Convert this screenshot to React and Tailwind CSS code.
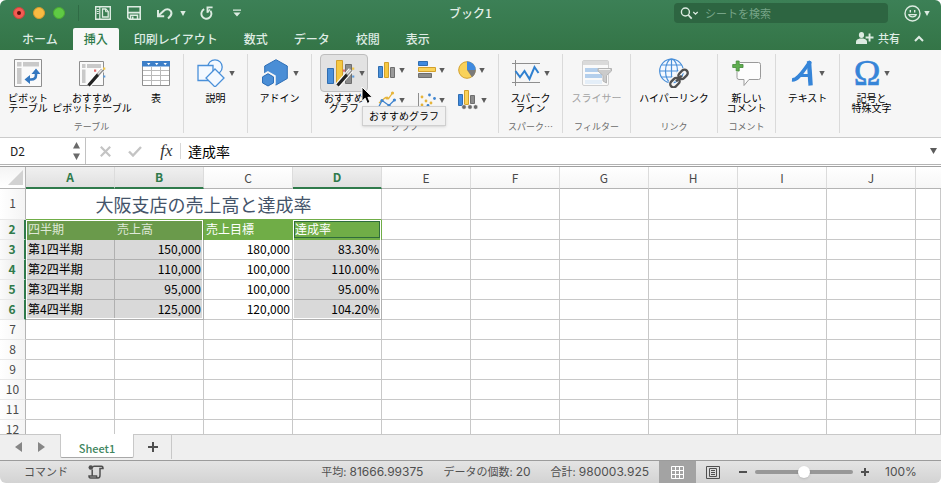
import { useState } from 'react';

const tabs = ['ホーム', '挿入', '印刷レイアウト', '数式', 'データ', '校閲', '表示'];
const columns = ['A', 'B', 'C', 'D', 'E', 'F', 'G', 'H', 'I', 'J'];
const selectedColumns = ['A', 'B', 'D'];

const records = [
  ['四半期', '売上高', '売上目標', '達成率'],
  ['第1四半期', '150,000', '180,000', '83.30%'],
  ['第2四半期', '110,000', '100,000', '110.00%'],
  ['第3四半期', '95,000', '100,000', '95.00%'],
  ['第4四半期', '125,000', '120,000', '104.20%'],
];

const stats = [
  { label: '平均', value: '81666.99375' },
  { label: 'データの個数', value: '20' },
  { label: '合計', value: '980003.925' },
];

const Caret = ({ className = 'text-[#5c5c5c]' }) => (
  <svg className={`shrink-0 ${className}`} width="6" height="5" viewBox="0 0 6 5" fill="currentColor">
    <path d="M.3 0h5.400L3 5z" />
  </svg>
);

/* Title bar icons */

const SidebarIcon = () => (
  <svg width="16" height="14" viewBox="0 0 16 14" fill="none" stroke="#dcebe1">
    <path d="M.7.7h14.6v12.6H.7z" strokeWidth="1.4" />
    <path d="M4.8 1v12" strokeWidth="1.2" />
    <path d="M1.8 3.5h2M1.8 5.5h2M1.8 7.5h2" strokeWidth="1" />
    <path d="M7.5 3h3.3l2.4 2.4V11H7.5z" strokeWidth="1.3" />
    <path d="M10.5 3v2.7h2.7" strokeWidth="1" />
  </svg>
);

const SaveIcon = () => (
  <svg width="14" height="14" viewBox="0 0 14 14" fill="none" stroke="#dcebe1">
    <path d="M.8.8h12.4v12.4H2.6L.8 11.6z" strokeWidth="1.6" />
    <path d="M1 6.6h12" strokeWidth="1.6" />
    <path d="M3.5 13V9.3h7V13" strokeWidth="1.5" />
    <path d="M5.7 10.5V13" strokeWidth="1.6" />
  </svg>
);

const UndoIcon = () => (
  <svg width="16" height="13" viewBox="0 0 16 13" fill="none" stroke="#dcebe1" strokeWidth="2">
    <path d="M1 3v6.200h6.200" />
    <path d="M1.400 8.800L6.500 4C9 1.600 12 1.800 13.600 3.800c1.600 2.200 1.200 4.600-2.600 7.700" />
  </svg>
);

const RedoIcon = () => (
  <svg width="13" height="14" viewBox="0 0 13 14" fill="none" stroke="#dcebe1" strokeWidth="1.900">
    <path d="M4.200 3.200A5 5 0 1 0 10.400 4.700" />
    <path d="M12.600 1.400H7.500v5.400" />
    <path d="M7.500 6.200L10 3.500" strokeWidth="1.300" />
  </svg>
);

const CustomizeIcon = () => (
  <svg width="8" height="8" viewBox="0 0 8 8" fill="#dcebe1">
    <path d="M0 .4h8v1.3H0zM.4 3.4h7.2L4 7.4z" />
  </svg>
);

const SearchIcon = () => (
  <svg className="shrink-0" width="19" height="13" viewBox="0 0 19 13" fill="none" stroke="#dcebe1" strokeWidth="1.4">
    <circle cx="5.4" cy="5" r="4" />
    <path d="M8.3 8l3.4 3.6" strokeWidth="1.8" />
    <path d="M13.3 5l2.2 2.1L17.7 5" strokeWidth="1.3" />
  </svg>
);

const SmileIcon = () => (
  <svg width="17" height="17" viewBox="0 0 17 17" fill="none" stroke="#dcebe1" strokeWidth="1.4">
    <circle cx="8.5" cy="8.5" r="7.5" />
    <path d="M6.3 5v2.400M10.700 5v2.400" />
    <path d="M4.800 9.600c.8 3 6.600 3 7.400 0z" strokeWidth="1.2" />
  </svg>
);

const ShareIcon = () => (
  <svg width="18" height="12" viewBox="0 0 18 12" fill="#dcebe1">
    <ellipse cx="5.5" cy="3" rx="2.6" ry="3" />
    <path d="M0 12V9.5C0 7.800 2 7 3.800 6.500h3.400C9 7 11 7.800 11 9.500V12z" />
    <path d="M12.600 1.500h1.900v3H17.500v1.900h-3v3h-1.900v-3h-3V4.500h3z" />
  </svg>
);

/* Ribbon icons */

const Wand = () => (
  <g>
    <path d="M10.500 26.500L24 11" stroke="#fff" strokeWidth="5.500" />
    <path d="M10.500 26.500L20 15.600" stroke="#222" strokeWidth="3.200" />
    <path d="M20 15.600L24.300 10.700" stroke="#8c8c8c" strokeWidth="3.200" />
    <path d="M20.200 14.800L23.700 10.800" stroke="#e8e8e8" strokeWidth="1.300" />
    <path d="M16 10.500h2.200v2.200H16z" fill="#e26b6b" />
    <path d="M25 8.500h2.300v2.300H25z" fill="#f2c84b" />
    <path d="M25.200 16.500h2.100v2.100h-2.100z" fill="#5a9bdc" />
  </g>
);

const PivotIcon = () => (
  <svg width="28" height="28" viewBox="0 0 28 28" fill="none">
    <path d="M.5.5h27v27H.5z" fill="#fafafa" stroke="#8e8e8e" />
    <path d="M3 3h4.500v4.500H3zM9 3h16v4.500H9zM3 9h4.500v16H3z" fill="#c9c9c9" />
    <path d="M15 20.500h2c3.500 0 5-1.700 5-4.500v-1.500" stroke="#3578c0" strokeWidth="2.600" />
    <path d="M10.500 20.500l5.500-4.500v9zM22 9.500l4.500 5.500h-9z" fill="#3578c0" />
  </svg>
);

const RecommendedPivotIcon = () => (
  <svg width="28" height="28" viewBox="0 0 28 28" fill="none">
    <path d="M1.500 2.500h24v24h-24z" fill="#fafafa" stroke="#8e8e8e" />
    <path d="M4 5h3.500v4H4zM9 5h14v4H9zM4 10.500h3.500V24H4z" fill="#c9c9c9" />
    <Wand />
  </svg>
);

const TableIcon = () => (
  <svg width="28" height="28" viewBox="0 0 28 28" fill="none">
    <path d="M.5 2.500h27v24H.5z" fill="#fff" stroke="#8e8e8e" />
    <path d="M0 2h28v5.500H0z" fill="#3d7fc8" />
    <path d="M5 4h3.400L6.700 6.200zM13 4h3.400l-1.700 2.200zM21.500 4h3.400l-1.700 2.200z" fill="#fff" />
    <path d="M1 11.500h26M1 16.500h26M1 21.500h26M9.500 8v18M18.500 8v18" stroke="#b9b9b9" />
  </svg>
);

const ShapesIcon = () => (
  <svg width="28" height="28" viewBox="0 0 28 28" fill="#f4f9ff" stroke="#4a90d9" strokeWidth="1.3">
    <circle cx="18" cy="8" r="7.2" />
    <path d="M1 6.500h15v15H1z" />
    <path d="M18 10l9 9-9 9-9-9z" />
  </svg>
);

const AddInIcon = () => (
  <svg width="28" height="28" viewBox="0 0 28 28" fill="#4a8ed6" stroke="#2f6fb6">
    <path d="M15 .7L26.300 7v12.500L15 26 3.700 19.500V7z" />
    <path d="M7 13.500l6.500 3.700v7.500L7 28.300.5 24.600v-7.400z" stroke="#f6f6f6" strokeWidth="2.500" />
    <path d="M7 14.700l5.500 3.200v6L7 27l-5.500-3.100v-6z" />
  </svg>
);

const RecommendedChartIcon = () => (
  <svg width="28" height="28" viewBox="0 0 28 28">
    <path d="M.5 9.500h6v15h-6z" fill="#4a90d9" stroke="#2f6db0" />
    <path d="M9.500 1.500h6v23h-6z" fill="#f5c842" stroke="#d3a02a" />
    <path d="M18.500 5.500h6v19h-6z" fill="#8c8c8c" stroke="#6e6e6e" />
    <Wand />
  </svg>
);

const ColumnChartIcon = () => (
  <svg width="18" height="18" viewBox="0 0 18 18">
    <path d="M.5 5.500h4v11h-4z" fill="#4a90d9" stroke="#2f6db0" />
    <path d="M6.500 1.500h4v15h-4z" fill="#f5c842" stroke="#d3a02a" />
    <path d="M12.500 6.500h4v10h-4z" fill="#9a9a9a" stroke="#6e6e6e" />
  </svg>
);

const BarChartIcon = () => (
  <svg width="18" height="18" viewBox="0 0 18 18">
    <path d="M.5.5h9v4h-9z" fill="#3f8ae0" stroke="#2f6db0" />
    <path d="M.5 6.500h17v4H.5z" fill="#f9d25a" stroke="#d3a02a" />
    <path d="M.5 12.500h13v4h-13z" fill="#8c8c8c" stroke="#6e6e6e" />
  </svg>
);

const PieChartIcon = () => (
  <svg width="18" height="18" viewBox="0 0 18 18">
    <circle cx="9" cy="9" r="8.3" fill="#f9d25a" stroke="#d3a02a" />
    <path d="M9 9V.3A8.700 8.700 0 0 1 17.700 9z" fill="#3f8ae0" />
    <path d="M9 9h8.700a8.700 8.700 0 0 1-3.700 7.200z" fill="#7a7a7a" />
  </svg>
);

const LineChartIcon = () => (
  <svg width="18" height="18" viewBox="0 0 18 18" fill="none" strokeWidth="1.3">
    <path d="M1 12l6.500-5.500 3 1.200L14.500 2" stroke="#e6b43a" />
    <path d="M0 17.500L4 9.500l7 5 5.500-5.500" stroke="#3f84cf" />
    <g fill="#e6b43a">
      <circle cx="9" cy="7" r="1.600" />
      <circle cx="14.500" cy="2" r="1.600" />
    </g>
    <g fill="#3f84cf">
      <circle cx="4" cy="9.500" r="1.600" />
      <circle cx="11" cy="14.500" r="1.600" />
      <circle cx="16.400" cy="9" r="1.600" />
    </g>
  </svg>
);

const ScatterChartIcon = () => (
  <svg width="18" height="18" viewBox="0 0 18 18">
    <path d="M.5 2v15.500H18" fill="none" stroke="#8e8e8e" />
    <g fill="#e6b43a">
      <circle cx="4" cy="6" r="1.400" />
      <circle cx="8" cy="10" r="1.400" />
      <circle cx="13" cy="12" r="1.400" />
      <circle cx="4" cy="14" r="1.400" />
    </g>
    <g fill="#3f84cf">
      <circle cx="11.500" cy="4" r="1.400" />
      <circle cx="16.500" cy="7.500" r="1.400" />
      <circle cx="10" cy="14.500" r="1.400" />
    </g>
  </svg>
);

const ComboChartIcon = () => (
  <svg width="20" height="20" viewBox="0 0 20 20">
    <path d="M.5 4.500h4v11h-4z" fill="#3f8ae0" stroke="#2f6db0" />
    <path d="M6.500.5h4v14h-4z" fill="#f9d25a" stroke="#d3a02a" />
    <path d="M12.500 5.500h4v8h-4z" fill="#8c8c8c" stroke="#6e6e6e" />
    <g fill="#6a6a6a" stroke="#f6f6f6" strokeWidth=".6">
      <circle cx="6" cy="17" r="2.300" />
      <circle cx="12" cy="17" r="2.300" />
      <circle cx="17.600" cy="17" r="2.300" />
    </g>
  </svg>
);

const SparklineIcon = () => (
  <svg width="28" height="28" viewBox="0 0 28 28" fill="none">
    <path d="M0 4.500h28M0 23.500h28M3.500 1v26" stroke="#8e8e8e" />
    <path d="M3.500 12l4.500 6 4.500-6 5 8 5-12 4 6" stroke="#2f80d0" strokeWidth="2" />
  </svg>
);

const SlicerIcon = () => (
  <svg width="30" height="28" viewBox="0 0 30 28" fill="none">
    <rect x=".5" y="1.500" width="26" height="25" rx="1.500" fill="#fafafa" stroke="#d0d0d0" />
    <path d="M1 2h25v4H1z" fill="#dadada" />
    <path d="M3 9h17v4H3zM3 15h17v4H3z" fill="#b4cfec" />
    <path d="M3 21h17v4H3z" fill="#e4eef8" />
    <path d="M16 9.500h13.500v2.500l-5 4.500V24l-3.500-2v-5.500L16 12z" fill="#cbcbcb" stroke="#b4b4b4" />
    <path d="M17 10.500h11" stroke="#f2f2f2" />
  </svg>
);

const HyperlinkIcon = () => (
  <svg width="30" height="30" viewBox="0 0 30 30" fill="none">
    <g stroke="#4a90d9" strokeWidth="1.200">
      <circle cx="12.500" cy="13" r="11.800" fill="#f4f9ff" />
      <ellipse cx="12.500" cy="13" rx="6" ry="11.800" />
      <path d="M12.500 1v24M.7 13h23.600M2.500 7h20M2.500 19h20" />
    </g>
    <g transform="rotate(-45 20 20.500)">
      <g stroke="#f6f6f6" strokeWidth="5">
        <rect x="10" y="17" width="10" height="7" rx="3.500" />
        <rect x="20" y="17" width="10" height="7" rx="3.500" />
      </g>
      <g stroke="#505050" strokeWidth="2.400">
        <rect x="9" y="17.200" width="10.500" height="6.600" rx="3.300" />
        <rect x="20.500" y="17.200" width="10.500" height="6.600" rx="3.300" />
        <path d="M16 20.500h8" />
      </g>
    </g>
  </svg>
);

const CommentIcon = () => (
  <svg width="30" height="28" viewBox="0 0 30 28" fill="none">
    <path d="M6 3.500h20.500q2 0 2 2v13q0 2-2 2H17l-5 6v-6H7q-2 0-2-2v-13z" fill="#fdfdfd" stroke="#9a9a9a" />
    <path d="M4 1h4v4h4v4H8v4H4V9H0V5h4z" fill="#f6f6f6" />
    <path d="M4.200 2h3v3.500H11v3H7.200V12h-3V8.500H.7v-3h3.500z" fill="#5fae4f" stroke="#44893a" strokeWidth=".8" />
  </svg>
);

const TextIcon = () => (
  <svg width="24" height="28" viewBox="0 0 24 28" fill="none" stroke="#3685d8">
    <path d="M1 20.800C7.500 21.500 13 10 19.500 2.500" strokeWidth="3.600" />
    <path d="M18 2.200l1.600 24.300" strokeWidth="4.400" />
    <path d="M7.500 16.500h11" strokeWidth="3" />
  </svg>
);

const OmegaIcon = () => (
  <svg width="26" height="28" viewBox="0 0 26 28">
    <text
      x="13"
      y="26"
      textAnchor="middle"
      className="fill-[#3685d8] stroke-[#3685d8] font-['Liberation_Serif',serif] text-[36px]"
      strokeWidth=".6"
    >
      Ω
    </text>
  </svg>
);

const Cursor = () => (
  <svg width="13" height="19" viewBox="0 0 13 19">
    <path d="M1 1v14.200l3.200-3 2.100 5.200 2.700-1.100-2.100-5H11.500z" fill="#000" stroke="#fff" strokeWidth="1" />
  </svg>
);

/* Ribbon building blocks */

const Group = ({ label, className, children }) => (
  <section className={`relative flex shrink-0 flex-col border-r border-[#dadada] ${className}`}>
    <div className="flex">{children}</div>
    <div className="mt-auto text-center text-[9px] leading-3 text-[#6b6b6b]">{label}</div>
  </section>
);

const Tool = ({ icon: Icon, lines, caret, active, disabled, className = 'w-full' }) => (
  <button
    type="button"
    disabled={disabled}
    className={`flex shrink-0 flex-col items-center gap-px ${disabled ? 'text-[#a3a3a3]' : 'text-black'} ${className}`}
  >
    <span
      className={`flex h-[38px] items-center justify-center gap-1 ${
        active ? 'w-12 rounded-sm border border-[#bdbdbd] bg-[#e2e2e2] pl-1' : ''
      }`}
    >
      <Icon />
      {caret && <Caret />}
    </span>
    <span className="text-[10px] leading-[10px] whitespace-nowrap">
      {lines.map((line) => (
        <span key={line} className="block">{line}</span>
      ))}
    </span>
  </button>
);

const chartTools = [
  { name: '縦棒', icon: ColumnChartIcon },
  { name: '横棒', icon: BarChartIcon },
  { name: '円', icon: PieChartIcon },
  { name: '折れ線', icon: LineChartIcon },
  { name: '散布図', icon: ScatterChartIcon },
  { name: '組み合わせ', icon: ComboChartIcon },
];

const TitleBar = () => (
  <div className="grid h-7 grid-cols-[1fr_auto_1fr] items-center pb-0.5">
    <div className="flex items-center pl-[13px]">
      <div className="flex gap-2">
        <button type="button" aria-label="閉じる" className="flex size-3 items-center justify-center rounded-full border border-[#d0433c] bg-[#f45b53]">
          <span className="size-1 rounded-full bg-[#5c0f0b]" />
        </button>
        <button type="button" aria-label="しまう" className="size-3 rounded-full border border-[#d99a2e] bg-[#f8bb42]" />
        <button type="button" aria-label="拡大" className="size-3 rounded-full border border-[#4cab32] bg-[#5fca44]" />
      </div>
      <span className="ml-[13px] h-4 w-px bg-[#2f6b45]" />
      <button type="button" aria-label="サイドバー" className="ml-4"><SidebarIcon /></button>
      <button type="button" aria-label="保存" className="ml-4"><SaveIcon /></button>
      <button type="button" aria-label="元に戻す" className="ml-4 flex items-center gap-[7px]">
        <UndoIcon />
        <Caret className="text-[#dcebe1]" />
      </button>
      <button type="button" aria-label="やり直し" className="ml-[14px]"><RedoIcon /></button>
      <button type="button" aria-label="カスタマイズ" className="ml-5"><CustomizeIcon /></button>
    </div>
    <h1 className="text-xs leading-4 font-medium text-[#e3efe7]">ブック1</h1>
    <div className="flex items-center justify-end pr-[11px]">
      <label className="flex h-5 w-[214px] items-center gap-[6px] rounded-sm bg-[#2d6541] pl-[6px]">
        <SearchIcon />
        <input
          type="search"
          aria-label="シートを検索"
          placeholder="シートを検索"
          className="w-full min-w-0 bg-transparent text-[11px] leading-4 outline-none placeholder:text-[#76a487]"
        />
      </label>
      <button type="button" aria-label="フィードバック" className="ml-4 flex items-center gap-[3px]">
        <SmileIcon />
        <Caret className="text-[#dcebe1]" />
      </button>
    </div>
  </div>
);

const TabBar = ({ current, onSelect }) => (
  <div className="flex h-[22px] justify-between pr-[17px] pl-[11px] text-[#dfece4]">
    <nav className="flex gap-1">
      {tabs.map((tab) => (
        <button
          key={tab}
          type="button"
          onClick={() => onSelect(tab)}
          className={`px-[11px] text-xs leading-5 font-medium ${tab === current ? 'rounded-t-xs bg-[#f8f8f8] text-[#2f7a4b]' : ''}`}
        >
          {tab}
        </button>
      ))}
    </nav>
    <div className="flex items-center pb-0.5">
      <button type="button" className="flex items-center gap-1 text-[11px] leading-4 font-medium">
        <ShareIcon />
        共有
      </button>
      <button type="button" aria-label="リボンを閉じる" className="ml-[14px]">
        <svg width="10" height="7" viewBox="0 0 10 7" fill="none" stroke="currentColor" strokeWidth="2">
          <path d="M1 6l4-4 4 4" />
        </svg>
      </button>
    </div>
  </div>
);

const Ribbon = () => (
  <div className="flex h-[88px] border-b border-[#cbcbcb] bg-[#f6f6f6] py-1">
    <Group label="テーブル" className="w-[184px]">
      <div className="flex gap-1 pl-2">
        <Tool icon={PivotIcon} lines={['ピボット', 'テーブル']} className="w-10" />
        <Tool icon={RecommendedPivotIcon} lines={['おすすめ', 'ピボットテーブル']} className="w-20" />
        <Tool icon={TableIcon} lines={['表']} className="w-10" />
      </div>
    </Group>
    <Group className="w-16">
      <Tool icon={ShapesIcon} lines={['説明']} caret />
    </Group>
    <Group className="w-16">
      <Tool icon={AddInIcon} lines={['アドイン']} caret />
    </Group>
    <Group label="グラフ" className="w-[187px]">
      <div className="pl-2">
        <Tool icon={RecommendedChartIcon} lines={['おすすめ', 'グラフ']} caret active className="w-12" />
      </div>
      <div className="grid grid-cols-3 pt-px pl-[10px]">
        {chartTools.map(({ name, icon: Icon }) => (
          <button key={name} type="button" aria-label={name} className="flex h-[30px] w-[41px] items-center gap-[3px]">
            <Icon />
            <Caret />
          </button>
        ))}
      </div>
      <div className="absolute top-8 left-[49px]"><Cursor /></div>
      <div role="tooltip" className="absolute top-[52px] left-[50px] border border-[#cfcfcf] bg-[#f1f1f1] px-[6px] text-[10px] leading-[18px] whitespace-nowrap text-black shadow">
        おすすめグラフ
      </div>
    </Group>
    <Group label="スパーク…" className="w-16">
      <Tool icon={SparklineIcon} lines={['スパーク', 'ライン']} caret />
    </Group>
    <Group label="フィルター" className="w-[68px]">
      <Tool icon={SlicerIcon} lines={['スライサー']} disabled />
    </Group>
    <Group label="リンク" className="w-[87px]">
      <Tool icon={HyperlinkIcon} lines={['ハイパーリンク']} />
    </Group>
    <Group label="コメント" className="w-[58px]">
      <Tool icon={CommentIcon} lines={['新しい', 'コメント']} />
    </Group>
    <Group className="w-16">
      <Tool icon={TextIcon} lines={['テキスト']} caret />
    </Group>
    <Group className="w-16 border-transparent">
      <Tool icon={OmegaIcon} lines={['記号と', '特殊文字']} caret />
    </Group>
  </div>
);

const FormulaBar = () => (
  <div className="flex h-[29px] shrink-0 border-b border-[#a0a0a0]">
    <div className="flex h-[27px] w-full items-center border-b border-[#b4b4b4] bg-white">
      <div className="flex h-full w-[86px] items-center border-r border-[#c2c2c2] pr-[5px] pl-[10px]">
        <input aria-label="名前ボックス" defaultValue="D2" className="w-full min-w-0 bg-transparent text-xs leading-4 text-[#222] outline-none" />
        <button type="button" aria-label="名前の一覧">
          <svg width="7" height="18" viewBox="0 0 7 18" fill="#6a6a6a">
            <path d="M3.500 0L7 6.500H0zM3.500 18L0 11.500h7z" />
          </svg>
        </button>
      </div>
      <button type="button" aria-label="キャンセル" className="ml-[14px]">
        <svg width="11" height="11" viewBox="0 0 11 11" stroke="#c4c4c4" strokeWidth="2.200">
          <path d="M.8.8l9.400 9.400M10.200.8L.8 10.200" />
        </svg>
      </button>
      <button type="button" aria-label="入力" className="ml-[17px]">
        <svg width="14" height="11" viewBox="0 0 14 11" fill="none" stroke="#c4c4c4" strokeWidth="2.400">
          <path d="M1 5.500l4 4L13 1" />
        </svg>
      </button>
      <button type="button" aria-label="関数の挿入" className="ml-[17px] w-[15px] font-['Liberation_Serif',serif] text-[17px] leading-5 text-[#333] italic">
        fx
      </button>
      <span className="ml-[6px] h-4 w-px bg-[#d8d8d8]" />
      <input aria-label="数式バー" defaultValue="達成率" className="ml-[7px] min-w-0 flex-1 bg-transparent text-sm leading-5 text-black outline-none" />
      <button type="button" aria-label="数式バーを展開" className="mr-1">
        <svg width="7" height="6" viewBox="0 0 7 6" fill="#5c5c5c"><path d="M0 0h7L3.500 6z" /></svg>
      </button>
    </div>
  </div>
);

const cellStyle = (row, col) => {
  if (row === 0) {
    if (col < 2) return 'border-[#6a9a4b] bg-[#6a9a4b] text-[#dfe8d8]';
    return 'border-[#70ad47] bg-[#70ad47] text-white';
  }
  if (col === 2) return 'border-[#c8c8c8] text-black';
  return 'border-[#b0b0b0] bg-[#d9d9d9] text-black';
};

const RowHeader = ({ number }) => {
  const selected = number >= 2 && number <= 6;
  return (
    <th
      scope="row"
      className={`border-b border-b-[#e8e8e8] px-0 pt-0 pb-0.5 text-center text-xs leading-4 ${
        selected
          ? 'border-r-2 border-r-[#2f7a4b] bg-linear-to-r from-[#fbfbfb] to-[#e6e6e6] font-bold text-[#2f7a4b]'
          : 'border-r border-r-[#b4b4b4] bg-linear-to-r from-white to-[#f4f4f4] font-normal text-[#4a4a4a]'
      }`}
    >
      {number}
    </th>
  );
};

const EmptyCells = ({ from }) =>
  Array.from({ length: 11 - from }, (_, i) => <td key={i} className="border-r border-b border-[#c8c8c8] p-0" />);

const Sheet = () => (
  <div className="min-h-0 flex-1 overflow-hidden bg-white">
    <table className="w-full table-fixed border-separate border-spacing-0">
      <colgroup>
        <col className="w-[26px]" />
        {columns.map((column) => <col key={column} className="w-[89px]" />)}
        <col />
      </colgroup>
      <thead>
        <tr className="h-[22px]">
          <td className="border-r border-b border-[#b4b4b4] bg-linear-to-b from-[#f4f4f4] to-white p-0">
            <svg className="ml-auto mr-0.5" width="15" height="15" viewBox="0 0 15 15" fill="#d2d2d2"><path d="M15 0v15H0z" /></svg>
          </td>
          {columns.map((column) => (
            <th
              key={column}
              scope="col"
              className={`border-r border-r-[#dcdcdc] p-0 text-xs leading-4 ${
                selectedColumns.includes(column)
                  ? 'border-b-2 border-b-[#2f7a4b] bg-linear-to-b from-[#f0f0f0] to-[#e0e0e0] font-bold text-[#2f7a4b]'
                  : 'border-b border-b-[#b4b4b4] bg-linear-to-b from-white to-[#f6f6f6] font-normal text-[#4a4a4a]'
              }`}
            >
              {column}
            </th>
          ))}
          <td className="border-b border-[#b4b4b4] bg-linear-to-b from-white to-[#f6f6f6] p-0" />
        </tr>
      </thead>
      <tbody>
        <tr className="h-[31px]">
          <RowHeader number={1} />
          <td colSpan={4} className="border-r border-b border-r-[#c8c8c8] border-b-[#70ad47] p-0 text-center text-lg leading-6 text-[#44546a]">
            大阪支店の売上高と達成率
          </td>
          <EmptyCells from={4} />
        </tr>
        {records.map((record, row) => (
          <tr key={record[0]} className="h-5">
            <RowHeader number={row + 2} />
            {record.map((value, col) => (
              <td
                key={col}
                className={`relative border-r border-b px-0.5 pt-0 pb-0.5 text-xs leading-4 ${row > 0 && col > 0 ? 'text-right' : ''} ${cellStyle(row, col)}`}
              >
                {value}
                {row === 0 && col === 0 && <span className="absolute top-0 left-0 z-10 h-[99px] w-[177px] border border-white" />}
                {row === 0 && col === 3 && (
                  <>
                    <span className="absolute top-0 left-0 z-10 h-[99px] w-[88px] border border-white" />
                    <span className="absolute inset-px z-10 border border-[#2f6b3c]" />
                  </>
                )}
              </td>
            ))}
            <EmptyCells from={4} />
          </tr>
        ))}
        {[7, 8, 9, 10, 11, 12].map((number) => (
          <tr key={number} className="h-5">
            <RowHeader number={number} />
            <EmptyCells from={0} />
          </tr>
        ))}
      </tbody>
    </table>
  </div>
);

const SheetTabs = () => (
  <div className="flex h-[26px] shrink-0 items-start border-t border-[#c8c8c8] bg-[#efefef]">
    <div className="flex h-6 w-[60px] items-center gap-4 pl-[15px]">
      <button type="button" aria-label="前のシート">
        <svg width="7" height="10" viewBox="0 0 7 10" fill="#868686"><path d="M7 0v10L0 5z" /></svg>
      </button>
      <button type="button" aria-label="次のシート">
        <svg width="7" height="10" viewBox="0 0 7 10" fill="#868686"><path d="M0 0v10l7-5z" /></svg>
      </button>
    </div>
    <button type="button" className="-mt-px h-6 w-[74px] rounded-b-xs border-x border-b border-[#a8a8a8] border-x-[#c8c8c8] bg-white pt-1 text-[11px] leading-4 font-medium text-[#3f8660]">
      Sheet1
    </button>
    <button type="button" aria-label="シートを追加" className="flex h-6 w-[38px] items-center justify-center border-r border-[#c8c8c8]">
      <svg width="10" height="10" viewBox="0 0 10 10" stroke="#4f4f4f" strokeWidth="2"><path d="M5 0v10M0 5h10" /></svg>
    </button>
  </div>
);

const StatusBar = () => {
  const [zoom, setZoom] = useState(100);

  return (
    <div className="flex h-[23px] shrink-0 items-center border-t border-[#9c9c9c] bg-linear-to-b from-[#e4e4e4] to-[#d3d3d3] font-[Inter,'Noto_Sans_CJK_JP',sans-serif] text-[11px] leading-4 text-[#505050]">
      <span className="pl-6">コマンド</span>
      <button type="button" aria-label="マクロの記録" className="ml-5">
        <svg width="16" height="14" viewBox="0 0 16 14" fill="none" stroke="#505050" strokeWidth="1.5">
          <circle cx="2.800" cy="2.500" r="2.300" fill="#505050" stroke="none" />
          <path d="M6 1.200h7.500q1.500 0 1.500 2.300h-3V10q0 3-2 3H2.500Q1 13 1 11h7.500q0 2 1.500 2M4.200 4.500V11M6 1.200q-1 0-1 1" />
        </svg>
      </button>
      <div className="ml-auto flex gap-5 pr-[10px]">
        {stats.map(({ label, value }) => (
          <span key={label}>
            {label}: <span className="text-xs leading-4">{value}</span>
          </span>
        ))}
      </div>
      <button type="button" aria-label="標準表示" className="flex h-full w-[37px] items-center justify-center bg-[#a3a3a3]">
        <svg width="13" height="13" viewBox="0 0 13 13" fill="none" stroke="#fff">
          <path d="M.5.5h12v12H.5zM.5 4.500h12M.5 8.500h12M4.500.5v12M8.500.5v12" />
        </svg>
      </button>
      <button type="button" aria-label="ページレイアウト" className="ml-[10px]">
        <svg width="14" height="13" viewBox="0 0 14 13" fill="none" stroke="#505050">
          <path d="M.5.5h13v12H.5z" />
          <path d="M3.500 2.500h7v8h-7zM5 4.500h4M5 6.500h4M5 8.500h4" />
        </svg>
      </button>
      <button type="button" aria-label="縮小" className="ml-[19px]">
        <svg width="8" height="8" viewBox="0 0 8 8" stroke="#505050" strokeWidth="2"><path d="M0 4h8" /></svg>
      </button>
      <input
        type="range"
        aria-label="ズーム"
        min="10"
        max="190"
        value={zoom}
        onChange={(e) => setZoom(Number(e.target.value))}
        className="mx-2 h-1 w-[98px] appearance-none rounded-full bg-[#989898] [&::-webkit-slider-thumb]:size-3 [&::-webkit-slider-thumb]:appearance-none [&::-webkit-slider-thumb]:rounded-full [&::-webkit-slider-thumb]:bg-white [&::-webkit-slider-thumb]:shadow"
      />
      <button type="button" aria-label="拡大" className="mr-4">
        <svg width="8" height="8" viewBox="0 0 8 8" stroke="#505050" strokeWidth="2"><path d="M0 4h8M4 0v8" /></svg>
      </button>
      <span className="w-14 text-xs leading-4">{zoom}%</span>
    </div>
  );
};

const App = () => {
  const [currentTab, setCurrentTab] = useState('挿入');

  return (
    <div className="flex h-screen flex-col overflow-hidden rounded-md bg-white font-['Noto_Sans_CJK_JP',sans-serif]">
      <header className="shrink-0">
        <div className="bg-linear-to-b from-[#3c8056] to-[#347547]">
          <TitleBar />
          <TabBar current={currentTab} onSelect={setCurrentTab} />
        </div>
        <Ribbon />
      </header>
      <FormulaBar />
      <Sheet />
      <SheetTabs />
      <StatusBar />
    </div>
  );
};

export default App;
